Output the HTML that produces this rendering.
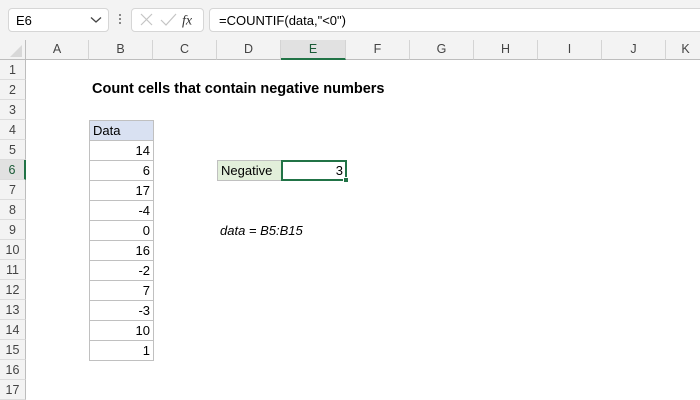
<!DOCTYPE html>
<html><head><meta charset="utf-8"><style>
*{margin:0;padding:0;box-sizing:border-box}
body{width:700px;height:400px;overflow:hidden;background:#fff;font-family:"Liberation Sans",Calibri,sans-serif;font-size:13px;color:#000;position:relative}
.a{position:absolute}
.top{left:0;top:0;width:700px;height:40px;background:#f3f3f3}
.box{background:#fff;border:1px solid #d6d6d6;border-radius:4px}
.ch{top:40px;height:20px;background:#f3f3f3;border-right:1px solid #d4d4d4;border-bottom:1px solid #bdbdbd;text-align:center;line-height:19px;color:#444;font-size:12.5px}
.rh{left:0;width:26px;height:20px;background:#f3f3f3;border-bottom:1px solid #dcdcdc;border-right:1px solid #bdbdbd;text-align:center;line-height:20px;color:#444;font-size:12.5px}
.c{height:21px;border:1px solid #c0c0c0;line-height:19px;padding:0 3px;font-size:13px}
.r{text-align:right}
</style></head><body>
<div class="a top"></div>
<div class="a box" style="left:8px;top:8px;width:101px;height:24px"></div>
<div class="a" style="left:16px;top:13px;font-size:13px">E6</div>
<svg class="a" style="left:90px;top:16px" width="12" height="8"><path d="M1 1.5 L6 6 L11 1.5" fill="none" stroke="#444" stroke-width="1.3"/></svg>
<div class="a" style="left:119px;top:14px;width:2px;height:2px;background:#888;box-shadow:0 4px 0 #888,0 8px 0 #888"></div>
<div class="a box" style="left:131px;top:8px;width:73px;height:24px"></div>
<svg class="a" style="left:138px;top:12px" width="60" height="16"><path d="M3 2 L14 13 M14 2 L3 13" stroke="#c4c4c4" stroke-width="1.2"/><path d="M23 8 L28 13 L38 2" fill="none" stroke="#c4c4c4" stroke-width="1.2"/><text x="44" y="12.5" font-family="Liberation Serif,serif" font-style="italic" font-size="14" fill="#333">fx</text></svg>
<div class="a box" style="left:209px;top:8px;width:500px;height:24px"></div>
<div class="a" style="left:219px;top:13px;font-size:13px">=COUNTIF(data,"&lt;0")</div>

<div class="a" style="left:0;top:40px;width:26px;height:20px;background:#f3f3f3;border-right:1px solid #bdbdbd;border-bottom:1px solid #bdbdbd"></div>
<svg class="a" style="left:9px;top:44px" width="14" height="14"><path d="M13 1 L13 13 L1 13 Z" fill="#d8d8d8"/></svg>
<div class="a ch" style="left:26px;width:63px">A</div>
<div class="a ch" style="left:89px;width:64px">B</div>
<div class="a ch" style="left:153px;width:64px">C</div>
<div class="a ch" style="left:217px;width:64px">D</div>
<div class="a ch" style="left:281px;width:65px;background:#e1e1e1;border-bottom:2px solid #217346;color:#1a5a36">E</div>
<div class="a ch" style="left:346px;width:64px">F</div>
<div class="a ch" style="left:410px;width:64px">G</div>
<div class="a ch" style="left:474px;width:64px">H</div>
<div class="a ch" style="left:538px;width:64px">I</div>
<div class="a ch" style="left:602px;width:64px">J</div>
<div class="a ch" style="left:666px;width:40px">K</div>

<div class="a rh" style="top:60px">1</div>
<div class="a rh" style="top:80px">2</div>
<div class="a rh" style="top:100px">3</div>
<div class="a rh" style="top:120px">4</div>
<div class="a rh" style="top:140px">5</div>
<div class="a rh" style="top:160px;background:#e1e1e1;border-right:2px solid #217346;color:#1a5a36">6</div>
<div class="a rh" style="top:180px">7</div>
<div class="a rh" style="top:200px">8</div>
<div class="a rh" style="top:220px">9</div>
<div class="a rh" style="top:240px">10</div>
<div class="a rh" style="top:260px">11</div>
<div class="a rh" style="top:280px">12</div>
<div class="a rh" style="top:300px">13</div>
<div class="a rh" style="top:320px">14</div>
<div class="a rh" style="top:340px">15</div>
<div class="a rh" style="top:360px">16</div>
<div class="a rh" style="top:380px">17</div>

<div class="a" style="left:92px;top:81px;font-weight:bold;font-size:14.5px">Count cells that contain negative numbers</div>

<div class="a c" style="left:89px;top:120px;width:65px;background:#d9e1f2">Data</div>
<div class="a c r" style="left:89px;top:140px;width:65px">14</div>
<div class="a c r" style="left:89px;top:160px;width:65px">6</div>
<div class="a c r" style="left:89px;top:180px;width:65px">17</div>
<div class="a c r" style="left:89px;top:200px;width:65px">-4</div>
<div class="a c r" style="left:89px;top:220px;width:65px">0</div>
<div class="a c r" style="left:89px;top:240px;width:65px">16</div>
<div class="a c r" style="left:89px;top:260px;width:65px">-2</div>
<div class="a c r" style="left:89px;top:280px;width:65px">7</div>
<div class="a c r" style="left:89px;top:300px;width:65px">-3</div>
<div class="a c r" style="left:89px;top:320px;width:65px">10</div>
<div class="a c r" style="left:89px;top:340px;width:65px">1</div>

<div class="a c" style="left:217px;top:160px;width:65px;background:#e2efda">Negative</div>
<div class="a c r" style="left:281px;top:160px;width:66px;border:2px solid #217346;line-height:17px;padding-right:2px">3</div>
<div class="a" style="left:343px;top:177px;width:6px;height:6px;background:#217346;border:1px solid #fff"></div>

<div class="a" style="left:220px;top:223px;font-style:italic;font-size:13px">data = B5:B15</div>
</body></html>
